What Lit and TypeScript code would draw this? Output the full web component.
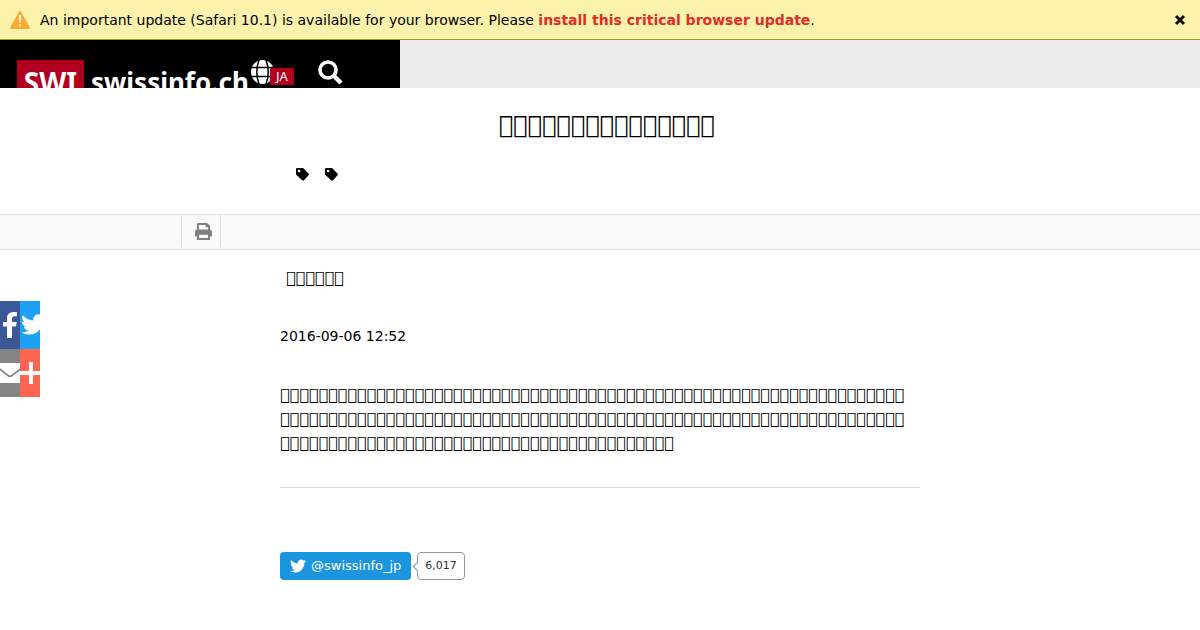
import { LitElement, html, css, svg } from "lit";
import { customElement } from "lit/decorators.js";

const BIRD =
  "M23.95 4.57a10 10 0 0 1-2.82.77 4.96 4.96 0 0 0 2.16-2.72c-.95.55-2 .95-3.13 1.18a4.92 4.92 0 0 0-8.38 4.48C7.69 8.09 4.07 6.13 1.64 3.16a4.82 4.82 0 0 0-.67 2.48c0 1.71.87 3.21 2.19 4.1a4.9 4.9 0 0 1-2.23-.62v.06a4.92 4.92 0 0 0 3.95 4.83 5 5 0 0 1-2.21.08 4.94 4.94 0 0 0 4.6 3.42A9.87 9.87 0 0 1 0 19.54a13.99 13.99 0 0 0 7.56 2.21c9.05 0 14-7.5 14-13.98 0-.21 0-.42-.02-.63a9.94 9.94 0 0 0 2.46-2.55z";

const bird = svg`<path fill="#fff" d=${BIRD} />`;

// The page's font has no glyph for these code points, so each one shows as an empty box.
const boxes = (count: number) => "\uE0F0".repeat(count);

@customElement("app-root")
export class AppRoot extends LitElement {
  static styles = css`
    :host {
      display: block;
      min-height: 100vh;
      background: #fff;
      color: #000;
      font: 14px/20px "DejaVu Sans", sans-serif;
    }
    * { box-sizing: border-box; }
    svg { display: block; flex: none; }
    button { border: 0; padding: 0; background: none; font: inherit; color: inherit; cursor: pointer; }
    a { color: inherit; text-decoration: none; }
    h1, p { margin: 0; font-weight: 400; }

    .notice {
      display: flex;
      align-items: center;
      gap: 10px;
      height: 40px;
      padding: 0 14px 0 10px;
      background: #fbf2ac;
      border-bottom: 1px solid #a29330;
    }
    .notice p { flex: 1; }
    .notice a { color: #e22c29; font-weight: 700; }

    .header { display: flex; height: 48px; background: #ececec; }
    .brand {
      display: flex;
      align-items: flex-start;
      width: 33.3334%;
      height: 48px;
      padding: 20px 0 0 17px;
      background: #000;
      color: #fff;
      overflow: hidden;
    }
    .logo { display: flex; gap: 7px; font: 700 26px/44px "Noto Sans", sans-serif; }
    .logo-mark { width: 67px; background: #b1001e; text-align: center; font-size: 28px; }
    .logo-name { width: 160px; }
    .lang { display: flex; align-items: flex-start; width: 67px; }
    .lang span {
      margin: 8px 0 0 -4px;
      padding: 0 6px;
      background: #b1001e;
      font: 13px/17px "Noto Sans", sans-serif;
    }

    .title { padding: 23px 0 0 14px; text-align: center; font-size: 24px; line-height: 28px; }
    .tags, .article { width: 640px; max-width: 100%; margin: 0 auto; }
    .tags { display: flex; gap: 15px; padding: 29px 0 32px 16px; }

    .tools {
      display: flex;
      height: 36px;
      padding-left: 181px;
      background: #f9f9f9;
      border: solid #dfdfdf;
      border-width: 1px 0;
    }
    .print {
      display: flex;
      align-items: center;
      justify-content: center;
      width: 40px;
      height: 32px;
      padding-left: 5px;
      border: solid #dfdfdf;
      border-width: 0 1px;
    }

    .article { font-size: 16px; line-height: 24px; overflow-wrap: anywhere; }
    .byline { padding: 16px 6px 0; }
    .date { display: block; padding: 34px 0 35px; font-size: 14px; }
    .lead { padding: 0 10px 32px 0; border-bottom: 1px solid #d9d9d9; }
    .follow { display: flex; gap: 6px; padding-top: 64px; line-height: 28px; }
    .follow-button {
      display: flex;
      align-items: center;
      gap: 5px;
      height: 28px;
      padding: 0 10px;
      border-radius: 4px;
      background: #1b95e0;
      color: #fff;
      font-size: 13px;
    }
    .count {
      position: relative;
      height: 28px;
      padding: 0 7px;
      border: 1px solid #8799a6;
      border-radius: 4px;
      background: #fff;
      color: #292f33;
      font-size: 11px;
      line-height: 26px;
    }
    .count::before {
      content: "";
      position: absolute;
      left: -4px;
      top: 10px;
      width: 6px;
      height: 6px;
      background: #fff;
      border: solid #8799a6;
      border-width: 0 0 1px 1px;
      transform: rotate(45deg);
    }

    .share {
      position: fixed;
      left: 0;
      top: 301px;
      display: grid;
      grid-template-columns: 20px 20px;
      grid-auto-rows: 48px;
    }
    .share a { display: flex; align-items: center; justify-content: center; overflow: hidden; }
    .facebook { background: #3b5998; }
    .share .twitter { background: #1da1f2; justify-content: flex-start; }
    .email { background: #848484; }
    .more { background: #ff6550; }
  `;

  render() {
    const tag = html`<a href="#" aria-label="Tag">
      <svg width="14" height="14" viewBox="0 0 15 15">
        <path fill-rule="evenodd" d="M1.3 0h5.6q.6 0 1 .4l5.600 5.700q.9.9 0 1.800l-5 5.200q-.9.9-1.800 0L.5 7.400Q0 7 0 6.300V1.300Q0 0 1.300 0zM3.300 1.800a1.400 1.400 0 1 0 0 2.800 1.400 1.400 0 0 0 0-2.800z" />
      </svg>
    </a>`;
    return html`
      <div class="notice" role="alert">
        <svg width="20" height="18" viewBox="0 0 20 18">
          <path fill="#fbab30" d="M10 0q.7 0 1.100.7l8.700 15.700q.6 1.400-.9 1.600H1.100q-1.500-.2-.9-1.600L8.900.7Q9.300 0 10 0z" />
          <path fill="#fffbe6" d="M8.900 4h2.200l-.4 8H9.300zM9 13.300h2v2H9z" />
        </svg>
        <p>An important update (Safari 10.1) is available for your browser. Please <a href="#">install this critical browser update</a>.</p>
        <button aria-label="Close">
          <svg width="12" height="12" viewBox="0 0 12 12">
            <path d="M2 2l8 8M10 2l-8 8" stroke="#111" stroke-width="3" />
          </svg>
        </button>
      </div>

      <header class="header">
        <div class="brand">
          <a class="logo" href="#"><span class="logo-mark">SWI</span><span class="logo-name">swissinfo.ch</span></a>
          <button class="lang" aria-label="Language">
            <svg width="23" height="24" viewBox="0 0 23 24">
              <ellipse cx="11.500" cy="12" rx="11.500" ry="12" fill="#fff" />
              <path d="M0 7.500h23M0 16.500h23M8 0Q3.600 12 8 24M15 0q4.400 12 0 24" fill="none" stroke="#000" stroke-width="1.500" />
            </svg>
            <span>JA</span>
          </button>
          <button aria-label="Search">
            <svg width="25" height="25" viewBox="0 0 25 25" fill="none" stroke="#fff">
              <circle cx="10" cy="10" r="8" stroke-width="3.600" />
              <path d="M16 16l7 7" stroke-width="4.400" />
            </svg>
          </button>
        </div>
      </header>

      <h1 class="title">${boxes(15)}</h1>
      <nav class="tags">${tag}${tag}</nav>

      <div class="tools">
        <button class="print" aria-label="Print">
          <svg width="17" height="17" viewBox="0 0 18 18">
            <path fill="#808080" fill-rule="evenodd" d="M3.400 0h9.400L16 3v4q2 .5 2 2.500V14h-2v4H2v-4H0V9.500Q0 7.500 2 7V1.400Q2 0 3.400 0zM4.200 2.200V7h9.600V4.500h-2.600V2.200zM4.200 12.500v3.300h9.600v-3.300z" />
          </svg>
        </button>
      </div>

      <main class="article">
        <p class="byline">${boxes(6)}</p>
        <time class="date" datetime="2016-09-06T12:52">2016-09-06 12:52</time>
        <p class="lead">${boxes(171)}</p>
        <div class="follow">
          <a class="follow-button" href="#"><svg width="16" height="16" viewBox="0 0 24 24">${bird}</svg>@swissinfo_jp</a>
          <a class="count" href="#">6,017</a>
        </div>
      </main>

      <nav class="share" aria-label="Share">
        <a class="facebook" href="#" aria-label="Facebook">
          <svg width="14" height="26" viewBox="0 0 14 26"><path fill="#fff" d="M4 26V14.500H0V10h4V6.600Q4 0 10.300 0L14 .200v4.100h-2.500Q9 4.300 9 6.700V10h4.700l-.7 4.500H9V26z" /></svg>
        </a>
        <a class="twitter" href="#" aria-label="Twitter">
          <svg width="26" height="26" viewBox="-1 0 25 25">${bird}</svg>
        </a>
        <a class="email" href="#" aria-label="Email">
          <svg width="26" height="20" viewBox="0 0 26 20">
            <path fill="#fff" d="M0 0h26v20H0z" />
            <path fill="none" stroke="#848484" stroke-width="1.600" d="M-1 3l12 9.500q2 1.400 4 0L27 3" />
          </svg>
        </a>
        <a class="more" href="#" aria-label="More">
          <svg width="24" height="24" viewBox="0 0 24 24"><path fill="#fff" d="M11 1h4v9h9v4h-9v9h-4v-9H1v-4h10z" /></svg>
        </a>
      </nav>
    `;
  }
}
